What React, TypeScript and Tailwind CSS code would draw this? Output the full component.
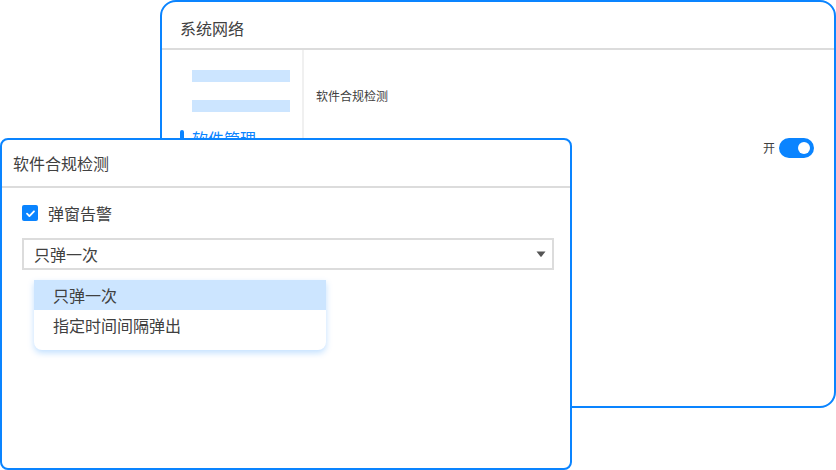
import React from 'react';

const BLUE = 'border-[#0a84ff]';

const Toggle = () => (
  <div className="flex h-[20px] w-[35px] items-center justify-end rounded-full bg-[#0a84ff] pr-[4px]">
    <div className="h-[12px] w-[12px] rounded-full bg-white" />
  </div>
);

const BackWindow = () => (
  <div className={`absolute left-[160px] top-0 h-[408px] w-[676px] rounded-[16px] border-2 ${BLUE} bg-white overflow-hidden`}>
    <div className="flex h-[48px] items-center border-b-2 border-[#dcdcdc] px-[18px] pt-[6px] text-[16px] text-[#404040]">
      系统网络
    </div>
    <div className="flex h-full">
      <div className="w-[142px] shrink-0 border-r-2 border-[#f0f0f0] pl-[30px] pt-[20px]">
        <div className="flex flex-col gap-[18px]">
          <div className="h-[12px] w-[98px] bg-[#cce5ff]" />
          <div className="h-[12px] w-[98px] bg-[#cce5ff]" />
        </div>
        <div className="relative mt-[16px] text-[16px] leading-[20px] text-[#0a84ff]">
          <div className="absolute left-[-12px] top-[2px] h-[16px] w-[4px] rounded-full bg-[#0a84ff]" />
          软件管理
        </div>
      </div>
      <div className="flex flex-1 flex-col pl-[12px] pr-[20px] pt-[37px]">
        <div className="text-[12px] leading-[18px] text-[#404040]">软件合规检测</div>
        <div className="mt-[33px] flex items-center justify-end gap-[4px]">
          <span className="text-[12px] leading-[18px] text-[#404040]">开</span>
          <Toggle />
        </div>
      </div>
    </div>
  </div>
);

const FrontWindow = () => (
  <div className={`absolute left-0 top-[138px] h-[332px] w-[572px] rounded-[8px] border-2 ${BLUE} bg-white`}>
    <div className="flex h-[48px] items-center border-b-2 border-[#dcdcdc] px-[11px] text-[16px] text-[#404040]">
      软件合规检测
    </div>
    <div className="px-[20px] pt-[17px]">
      <div className="flex items-center gap-[10px]">
        <div className="flex h-[16px] w-[16px] items-center justify-center rounded-[2px] bg-[#0a84ff]">
          <svg width="11" height="11" viewBox="0 0 12 12" fill="none">
            <path d="M2.2 6.2l2.6 2.6 5-5.2" stroke="white" strokeWidth="2" strokeLinecap="round" strokeLinejoin="round" />
          </svg>
        </div>
        <span className="text-[16px] leading-[16px] text-[#404040]">弹窗告警</span>
      </div>
      <div className="relative mt-[17px] w-[532px]">
        <div className="flex h-[32px] items-center justify-between border-2 border-[#dcdcdc] pl-[10px] pr-[6px] text-[16px] text-[#404040]">
          <span>只弹一次</span>
          <svg width="10" height="6" viewBox="0 0 10 6">
            <path d="M0.5 0.5h9L5.8 5.2a1 1 0 0 1-1.6 0z" fill="#555" />
          </svg>
        </div>
        <div className="absolute left-[12px] top-[42px] w-[292px] overflow-hidden rounded-b-[8px] bg-white pb-[10px] text-[16px] text-[#404040] shadow-[0_3px_6px_rgba(10,132,255,0.25)]">
          <div className="flex h-[30px] items-center bg-[#cce5ff] pl-[19px]">只弹一次</div>
          <div className="flex h-[30px] items-center pl-[19px]">指定时间间隔弹出</div>
        </div>
      </div>
    </div>
  </div>
);

export default function App() {
  return (
    <div
      className="relative h-[470px] w-[836px] overflow-hidden bg-white"
      style={{ fontFamily: '"Noto Sans CJK SC", "Noto Sans", sans-serif' }}
    >
      <BackWindow />
      <FrontWindow />
    </div>
  );
}
